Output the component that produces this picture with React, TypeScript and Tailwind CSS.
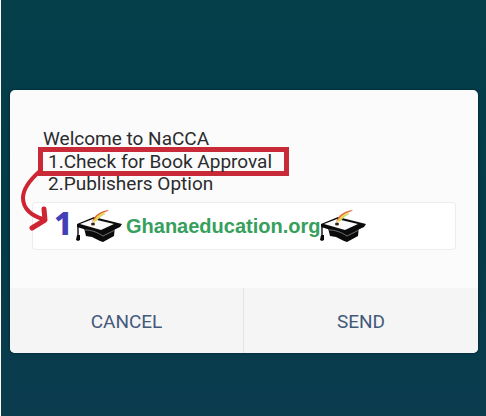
import { useState } from "react";

function GradCap() {
  return (
    <svg viewBox="0 0 46 32" className="h-8 w-[46px] shrink-0" aria-hidden="true">
      <path d="M8 18 10 26l6 1 8 4 3 1 11-6 1-10z" fill="#0b0b0b" />
      <path d="M1 14 18 7l28 7-2 3-17 8L1 17z" fill="#0b0b0b" />
      <path d="M4 14 17 9l21 5-13 6z" fill="#fafafa" />
      <path d="M9 20c6 0 12 2 18 6l12-6" stroke="#8a8a8a" strokeWidth="0.8" fill="none" />
      <path d="M2 15v11" stroke="#0b0b0b" strokeWidth="1.4" fill="none" />
      <path d="M1 25h3v5l-2 1-2-1z" fill="#0b0b0b" />
      <path d="M16 12c2-6 7-11 17-12-1 1-3 2-4 2-5 2-7 4-10 7z" fill="#df6a3c" />
      <path d="M17 13c1-4 5-9 13-11-4 3-7 6-11 10z" fill="#f4d545" />
      <path d="M20 11c3-4 6-6 9-7" stroke="#c3d873" strokeWidth="1" fill="none" />
      <ellipse cx="17" cy="14" rx="2" ry="1.6" fill="#3a2410" />
    </svg>
  );
}

function RedArrow() {
  return (
    <svg
      viewBox="0 0 34 68"
      className="pointer-events-none absolute top-[18px] -left-[19px] h-[68px] w-[34px]"
      fill="none"
      stroke="#cf2532"
      strokeWidth="4"
      strokeLinecap="round"
      strokeLinejoin="round"
      aria-hidden="true"
    >
      <path d="M21 6C13 13 4 22 4 33c0 11 9 18 20 21" />
      <path d="M25 44l1 11-13 8" strokeWidth="5" />
    </svg>
  );
}

function App() {
  const [reply, setReply] = useState("1");

  return (
    <main className="min-h-screen border-l border-white bg-linear-to-b from-[#043f4a] via-[#043b48] to-[#0a3c4e] pt-[90px] pr-2 pb-16 pl-[9px] font-[Roboto,sans-serif]">
      <form
        onSubmit={(e) => e.preventDefault()}
        className="overflow-hidden rounded-[5px] bg-[#fbfbfb] shadow-[0_0_3px_#02202c]"
      >
        <div className="px-[22px] pt-[38px] pb-[38px]">
          <div className="pl-[11px] text-[19px] leading-[22px] text-[#2b2b2e]">
            <p>Welcome to NaCCA</p>
            <div className="relative -my-[3px] -ml-[5px] w-[251px]">
              <p className="border-[5px] border-[#c92a38] pl-[5px] leading-[19px]">
                1.Check for Book Approval
              </p>
              <RedArrow />
            </div>
            <p className="pl-[5px]">2.Publishers Option</p>
          </div>

          <div className="mt-[7px] flex h-12 items-center rounded-[4px] border border-[#ececec] bg-white pl-[21px]">
            <input
              aria-label="Reply"
              value={reply}
              onChange={(e) => setReply(e.target.value)}
              className="h-10 w-[22px] bg-transparent pb-2 font-['Noto_Sans',sans-serif] text-[32px] leading-8 font-extrabold text-[#4340b5] outline-none"
            />
            <GradCap />
            <span className="ml-1 font-['Liberation_Sans',sans-serif] text-xl font-bold text-[#36a05c]">
              Ghanaeducation.org
            </span>
            <GradCap />
          </div>
        </div>

        <div className="grid grid-cols-2 bg-[#f5f5f6] text-[19px] text-[#44597a]">
          <button type="button" className="h-[65px] border-r border-[#e4e4e6] pt-1">
            CANCEL
          </button>
          <button type="submit" className="h-[65px] pt-1">
            SEND
          </button>
        </div>
      </form>
    </main>
  );
}

export default App;
